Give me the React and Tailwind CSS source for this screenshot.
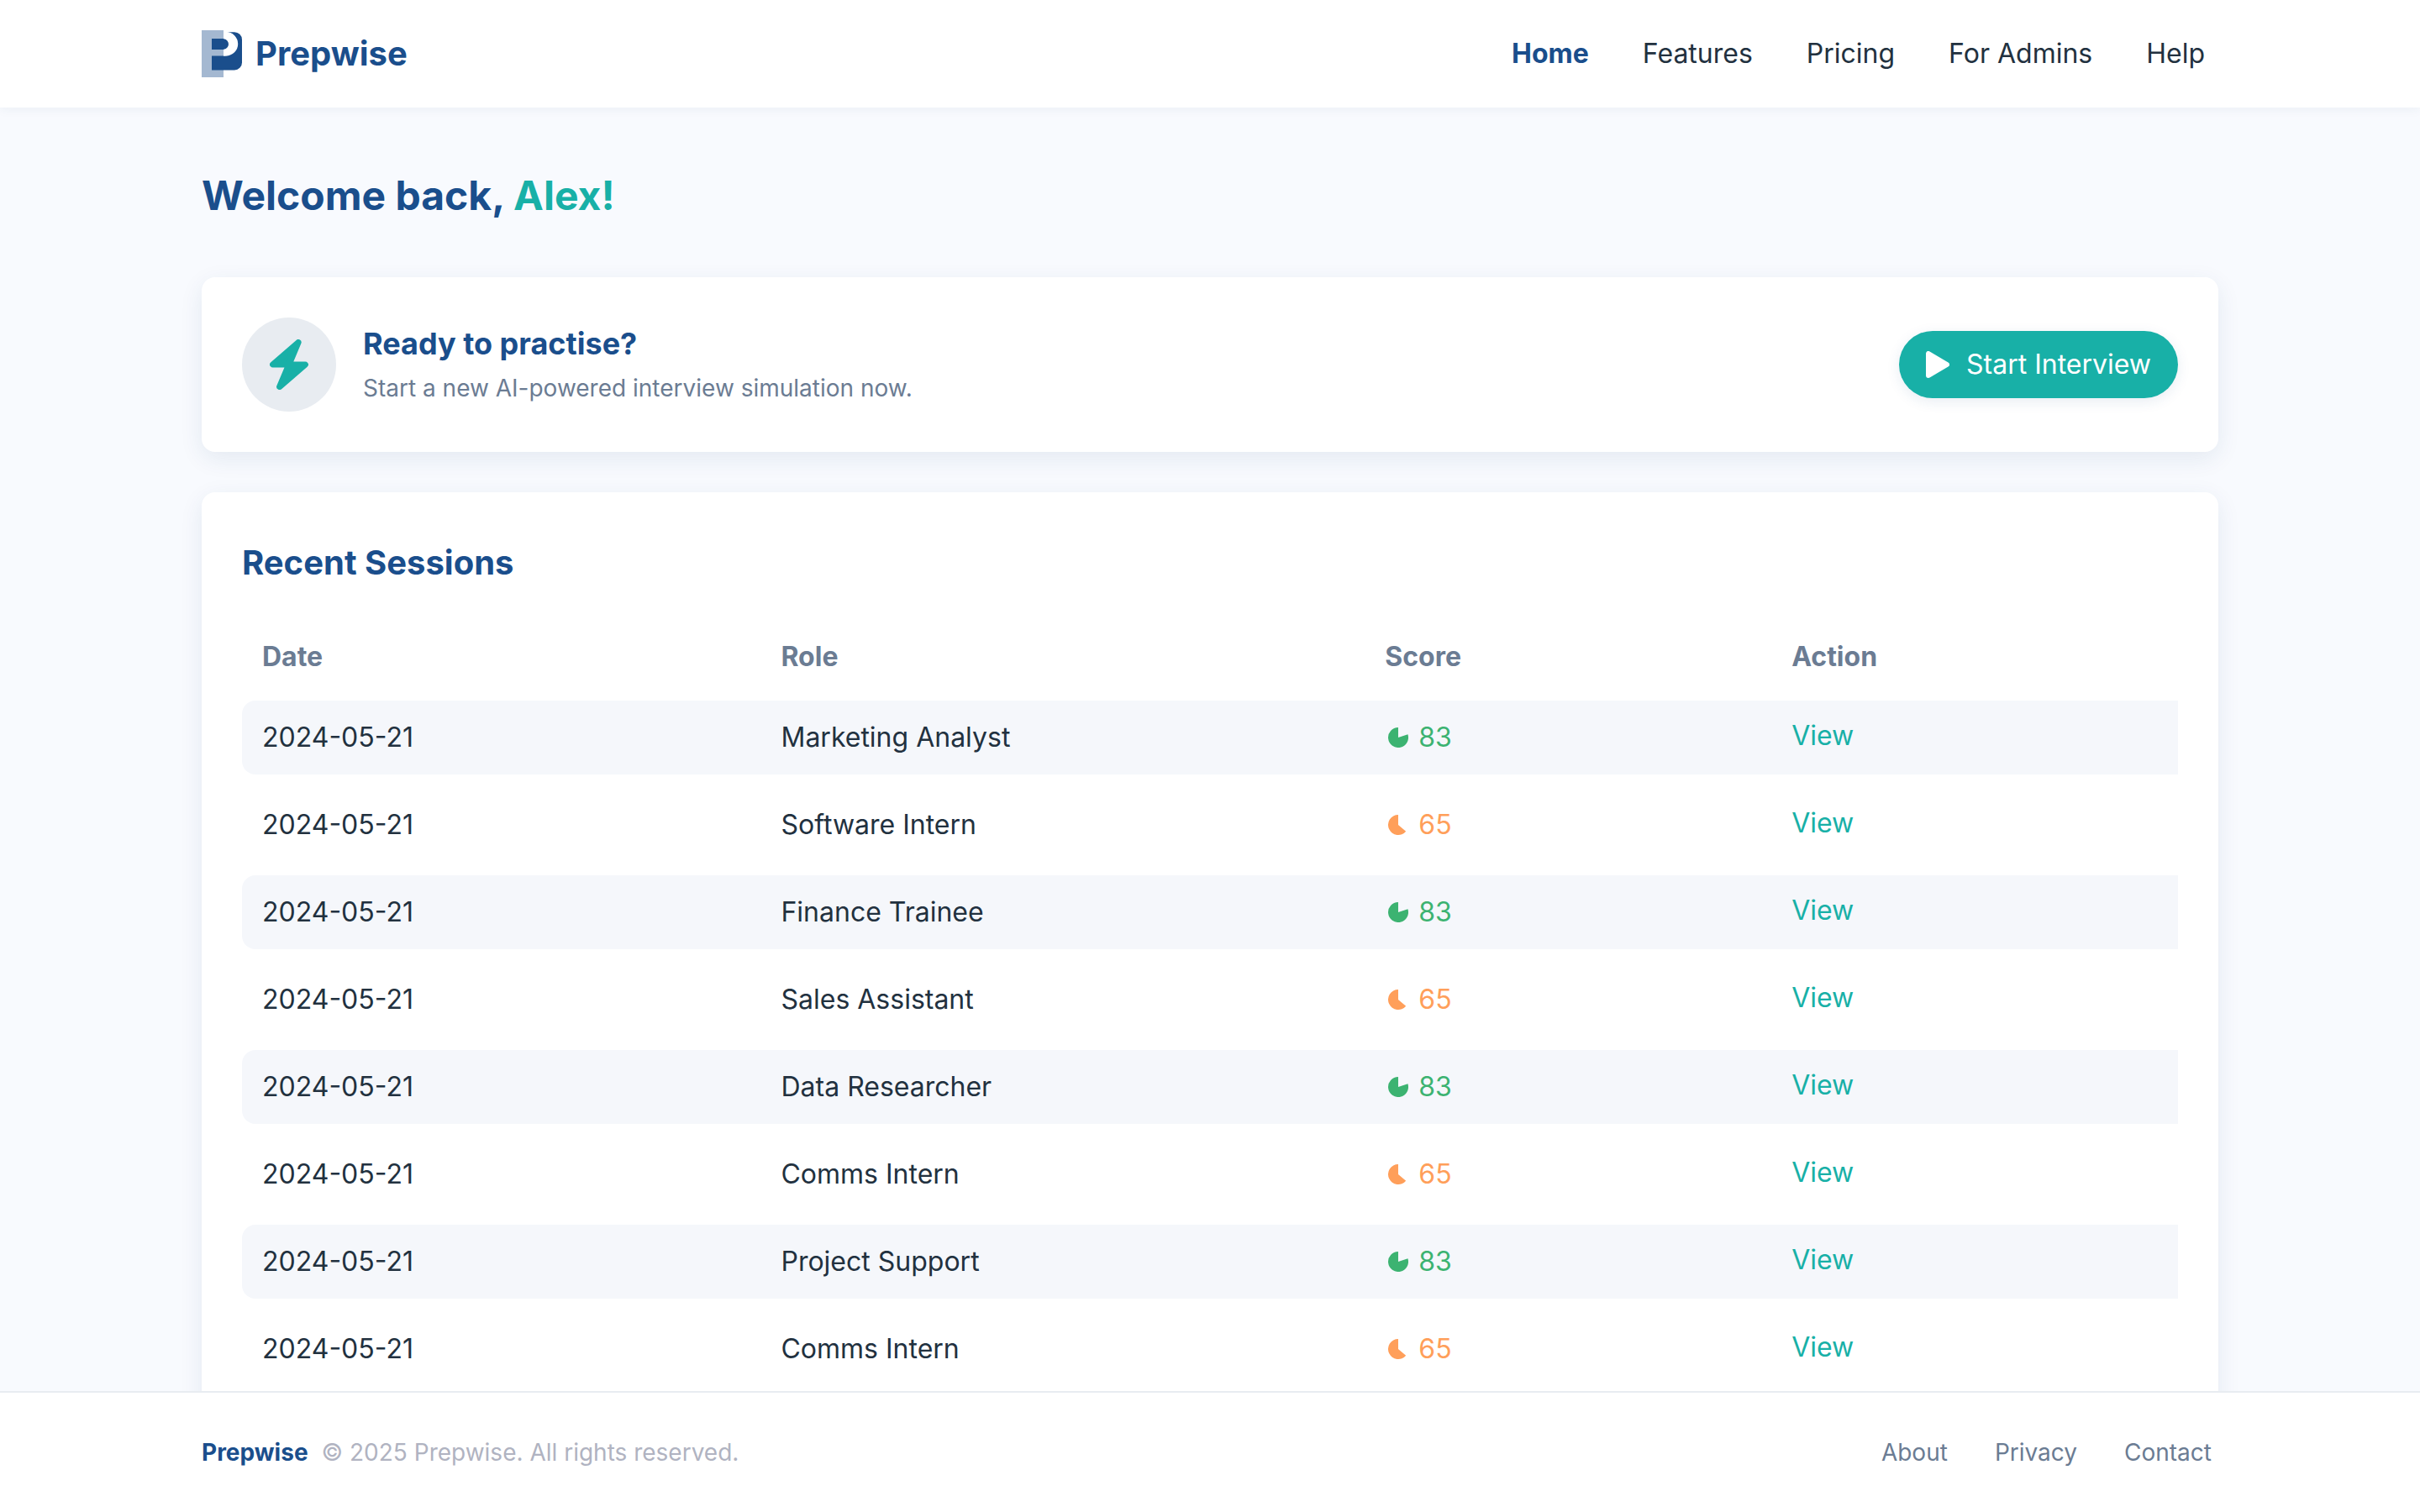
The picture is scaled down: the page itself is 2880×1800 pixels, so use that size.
import React from "react";

const navItems = ["Features", "Pricing", "For Admins", "Help"];
const roles = [
  "Marketing Analyst",
  "Software Intern",
  "Finance Trainee",
  "Sales Assistant",
  "Data Researcher",
  "Comms Intern",
  "Project Support",
  "Comms Intern",
];
const sessions = roles.map((role, i) => ({
  date: "2024-05-21",
  role,
  score: i % 2 === 0 ? 83 : 65,
}));

function Logo() {
  return (
    <svg viewBox="0 0 48 56" className="h-14 w-12" aria-hidden="true">
      <rect width="26" height="56" fill="#a4b8d1" />
      <path
        d="M12 10h13.500a6.500 6.500 0 0 1 0 13H12zM12 30.500h15a14.200 14.200 0 0 0 2-28.300h10a9 9 0 0 1 9 9V38.500a9 9 0 0 1-9 9H12z"
        fill="#1a4e8c"
      />
      <path
        d="M26 2h3a14.200 14.200 0 0 1 0 28.400h-3v-7.400a6.500 6.500 0 0 0 0-13z"
        fill="#fff"
      />
    </svg>
  );
}

function Bolt() {
  return (
    <svg
      viewBox="0 0 46 60"
      className="h-15 w-12"
      fill="#18b0a7"
      stroke="#18b0a7"
      strokeWidth="7.2"
      strokeLinejoin="round"
      aria-hidden="true"
    >
      <path d="M34 3.600 3.700 30H22.900L11.700 56.400 42.300 30H22.900z" />
    </svg>
  );
}

function ScorePie({ high }) {
  return (
    <svg viewBox="0 0 24 24" className="h-6 w-6" fill="currentColor" aria-hidden="true">
      {high ? (
        <path d="M12 12V0A12 12 0 1 0 23.400 8.200z" />
      ) : (
        <path d="M12 12V0A12 12 0 1 0 21.200 19.700z" />
      )}
    </svg>
  );
}

export default function App() {
  return (
    <div className="flex h-screen flex-col overflow-hidden bg-[#f8fafe] font-['Inter',sans-serif] text-[32px] leading-12 text-[#22313f]">
      <header className="z-10 h-32 shrink-0 bg-white shadow-[0_2px_12px_rgba(26,60,100,0.06)]">
        <div className="mx-auto flex h-full max-w-[2400px] items-center justify-between">
          <a href="#home" className="flex items-center gap-4 text-[40px] font-bold text-[#1a4e8c]">
            <Logo />
            Prepwise
          </a>
          <nav className="flex gap-8">
            <a href="#home" className="px-4 font-bold text-[#1a4e8c]">Home</a>
            {navItems.map((item) => (
              <a key={item} href="#nav" className="px-4">{item}</a>
            ))}
          </nav>
        </div>
      </header>

      <main className="min-h-0 flex-1 overflow-hidden">
        <div className="mx-auto flex max-w-[2400px] flex-col gap-12 pt-16">
          <h1 className="mb-2 text-[48px] leading-[82px] font-bold text-[#1a4e8c]">
            Welcome back, <span className="text-[#18b0a7]">Alex!</span>
          </h1>

          <section className="flex items-center gap-8 rounded-2xl bg-white p-12 shadow-[0_8px_28px_rgba(26,66,110,0.09)]">
            <div className="flex h-28 w-28 items-center justify-center rounded-full bg-[#e8ecf1]">
              <Bolt />
            </div>
            <div className="flex-1">
              <h2 className="text-[36px] leading-14 font-bold text-[#1a4e8c]">Ready to practise?</h2>
              <p className="text-[28px] leading-[50px] text-[#6b7c93]">
                Start a new AI-powered interview simulation now.
              </p>
            </div>
            <button
              type="button"
              className="flex h-20 items-center gap-5 rounded-full bg-[#18b0a7] px-8 text-white shadow-[0_4px_16px_rgba(26,78,140,0.1)]"
            >
              <svg viewBox="0 0 28 32" className="h-8 w-7" fill="currentColor" aria-hidden="true">
                <path d="M3 3v26l22-13z" stroke="currentColor" strokeWidth="6" strokeLinejoin="round" />
              </svg>
              Start Interview
            </button>
          </section>

          <section className="rounded-2xl bg-white p-12 shadow-[0_8px_28px_rgba(26,66,110,0.09)]">
            <h2 className="text-[40px] leading-[72px] font-bold text-[#1a4e8c]">Recent Sessions</h2>
            <table className="mt-6 w-full table-fixed border-separate border-spacing-x-0 border-spacing-y-4 text-left">
              <thead className="text-[#6b7c93]">
                <tr>
                  <th className="w-[26.8%] px-6 py-3 font-bold">Date</th>
                  <th className="w-[31.2%] px-6 py-3 font-bold">Role</th>
                  <th className="w-[21%] px-6 py-3 font-bold">Score</th>
                  <th className="w-[21%] px-6 py-3 font-bold">Action</th>
                </tr>
              </thead>
              <tbody>
                {sessions.map((s, i) => (
                  <tr key={i} className="odd:bg-[#f5f7fb]">
                    <td className="rounded-l-2xl px-6 py-5">{s.date}</td>
                    <td className="px-6 py-5">{s.role}</td>
                    <td className="px-6 py-5">
                      <span
                        className={
                          s.score > 80
                            ? "flex items-center gap-3 pl-1 text-[#3cb371]"
                            : "flex items-center gap-3 pl-1 text-[#ff9f5a]"
                        }
                      >
                        <ScorePie high={s.score > 80} />
                        {s.score}
                      </span>
                    </td>
                    <td className="px-6 pt-[18px] pb-[22px]">
                      <a href="#session" className="text-[#18b0a7]">View</a>
                    </td>
                  </tr>
                ))}
              </tbody>
            </table>
          </section>
        </div>
      </main>

      <footer className="z-10 h-36 shrink-0 border-t-2 border-[#e8ecf1] bg-white text-[28px]">
        <div className="mx-auto flex h-full max-w-[2400px] items-center justify-between">
          <p className="flex gap-4 text-[#b0b3c1]">
            <strong className="font-bold text-[#1a4e8c]">Prepwise</strong>
            © 2025 Prepwise. All rights reserved.
          </p>
          <nav className="flex gap-10 text-[#6b7c93]">
            <a href="#about" className="px-2">About</a>
            <a href="#privacy" className="px-2">Privacy</a>
            <a href="#contact" className="px-2">Contact</a>
          </nav>
        </div>
      </footer>
    </div>
  );
}
